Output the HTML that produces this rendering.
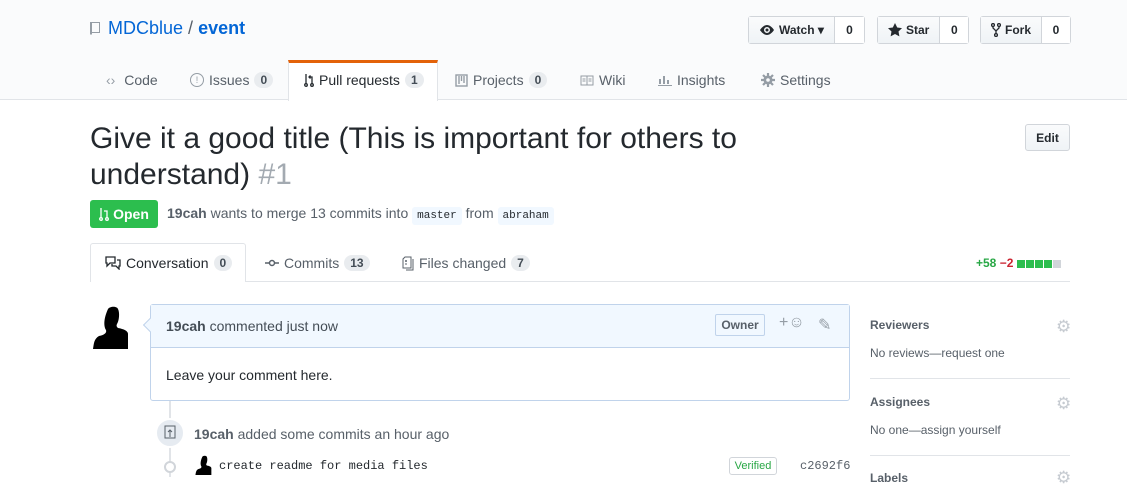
<!DOCTYPE html>
<html><head><meta charset="utf-8"><style>
*{box-sizing:border-box;margin:0;padding:0}
body{width:1127px;height:477px;overflow:hidden;background:#fff;font-family:"Liberation Sans",sans-serif;font-size:14px;color:#24292e;position:relative}
.abs{position:absolute}
.hdr{position:absolute;left:0;top:0;width:1127px;height:100px;background:#fafbfc;border-bottom:1px solid #e1e4e8}
.repo{left:89px;top:18px;font-size:18px;color:#0366d6}
.btn{position:absolute;top:16px;height:28px;border:1px solid #d1d5da;border-radius:3px;display:flex;font-size:12px;font-weight:bold}
.btn .l{background:linear-gradient(#fafbfc,#eff3f6);padding:0 10px;display:flex;align-items:center;gap:4px;border-right:1px solid #d1d5da}
.btn .r{background:#fff;width:28px;display:flex;align-items:center;justify-content:center}
.tab{position:absolute;top:72px;color:#586069;font-size:14px;display:flex;align-items:center;gap:5px}
.cnt{background:#e9ecef;border-radius:10px;font-size:12px;font-weight:bold;padding:1px 6px;color:#444d56}
.sel{position:absolute;left:288px;top:60px;width:150px;height:41px;background:#fff;border:1px solid #e1e4e8;border-top:3px solid #e36209;border-bottom:none}
.title{left:90px;top:121px;font-size:30px;line-height:36px;color:#24292e;width:720px}
code{font-family:"Liberation Mono",monospace;font-size:11px;background:#f1f8ff;padding:3px 5px;border-radius:3px;color:#24292e}
.side h{display:block;font-size:12px;font-weight:bold;color:#586069}
.side p{font-size:12px;color:#586069;margin-top:14px}
</style></head><body>
<div class="hdr"></div>
<svg class="abs" style="left:89px;top:21px" width="12" height="16" viewBox="0 0 12 16"><path d="M1 1h10v11H3v2l-1-1-1 1z M3 2v9h7V2z" fill="#959da5"/></svg>
<div class="abs repo" style="left:108px">MDCblue <span style="color:#586069">/</span> <b>event</b></div>
<div class="btn" style="left:748px"><div class="l"><svg width="16" height="12" viewBox="0 0 16 12"><path d="M8 1C4 1 1 6 1 6s3 5 7 5 7-5 7-5-3-5-7-5zm0 8a3 3 0 110-6 3 3 0 010 6zm0-4.5a1.5 1.5 0 100 3 1.5 1.5 0 000-3z" fill="#24292e"/></svg>Watch ▾</div><div class="r" style="width:29px">0</div></div>
<div class="btn" style="left:877px"><div class="l"><svg width="14" height="14" viewBox="0 0 14 14"><path d="M7 0l2.2 4.5 4.8.6-3.5 3.4.9 4.9L7 11l-4.4 2.4.9-4.9L0 5.1l4.8-.6z" fill="#24292e"/></svg>Star</div><div class="r">0</div></div>
<div class="btn" style="left:980px"><div class="l"><svg width="10" height="14" viewBox="0 0 10 14" fill="none" stroke="#24292e" stroke-width="1.3"><circle cx="2" cy="2" r="1.4"/><circle cx="8" cy="2" r="1.4"/><circle cx="5" cy="12" r="1.4"/><path d="M2 3.5v1.5l3 3 3-3V3.5M5 8v2.5"/></svg>Fork</div><div class="r">0</div></div>
<div class="sel"></div>
<div class="tab" style="left:106px"><span style="color:#959da5">‹›</span>&nbsp;Code</div>
<div class="tab" style="left:190px"><span style="color:#959da5;border:1.5px solid #959da5;border-radius:50%;width:14px;height:14px;font-size:9px;display:inline-flex;align-items:center;justify-content:center">!</span>Issues <span class="cnt">0</span></div>
<div class="tab" style="left:304px;color:#24292e"><svg width="10" height="14" viewBox="0 0 10 14" fill="none" stroke="#24292e" stroke-width="1.3"><circle cx="2" cy="12" r="1.3"/><circle cx="8" cy="12" r="1.3"/><path d="M2 1v9.5M8 10.5V4H5M6.5 2.5L5 4l1.5 1.5"/></svg>Pull requests <span class="cnt">1</span></div>
<div class="tab" style="left:455px"><svg width="13" height="13" viewBox="0 0 13 13" fill="none" stroke="#959da5" stroke-width="1.4"><rect x="1" y="1" width="11" height="11"/><path d="M4 2v8M6.5 2v5M9 2v7"/></svg>Projects <span class="cnt">0</span></div>
<div class="tab" style="left:580px"><svg width="14" height="11" viewBox="0 0 14 11" fill="none" stroke="#959da5"><rect x="1" y="1" width="12" height="9"/><path d="M7 1v9M2.5 4h3M2.5 6h3M8.5 4h3M8.5 6h3"/></svg>Wiki</div>
<div class="tab" style="left:658px"><svg width="14" height="12" viewBox="0 0 14 12" fill="#959da5"><rect x="0" y="11" width="14" height="1"/><rect x="1" y="5" width="2" height="5"/><rect x="5" y="2" width="2" height="8"/><rect x="9" y="6" width="2" height="4"/></svg>Insights</div>
<div class="tab" style="left:761px"><svg width="14" height="14" viewBox="0 0 14 14"><circle cx="7" cy="7" r="4.5" fill="#959da5"/><path d="M7 0v14M0 7h14M2 2l10 10M12 2L2 12" stroke="#959da5" stroke-width="2.2"/><circle cx="7" cy="7" r="1.8" fill="#fafbfc"/></svg>Settings</div>

<div class="abs title">Give it a good title (This is important for others to understand) <span style="color:#a3aab1">#1</span></div>
<div class="abs" style="left:1025px;top:124px;width:45px;height:27px;border:1px solid #d1d5da;border-radius:3px;background:linear-gradient(#fafbfc,#eff3f6);font-size:12px;font-weight:bold;display:flex;align-items:center;justify-content:center">Edit</div>
<div class="abs" style="left:90px;top:200px;width:68px;height:28px;background:#2cbe4e;border-radius:3px;color:#fff;font-weight:bold;font-size:14px;display:flex;align-items:center;justify-content:center;gap:4px"><svg width="10" height="14" viewBox="0 0 10 14" fill="none" stroke="#fff" stroke-width="1.3"><circle cx="2" cy="12" r="1.3"/><circle cx="8" cy="12" r="1.3"/><path d="M2 1v9.5M8 10.5V4H5"/></svg>Open</div>
<div class="abs" style="left:167px;top:205px;color:#586069"><b style="color:#586069">19cah</b> wants to merge 13 commits into <code>master</code> from <code>abraham</code></div>

<div class="abs" style="left:90px;top:281px;width:980px;border-top:1px solid #e1e4e8"></div>
<div class="abs" style="left:90px;top:243px;width:156px;height:39px;background:#fff;border:1px solid #e1e4e8;border-bottom:none;border-radius:3px 3px 0 0"></div>
<div class="tab" style="left:105px;top:255px;color:#24292e"><svg width="16" height="14" viewBox="0 0 16 14" fill="none" stroke="#24292e" stroke-width="1.3"><path d="M1 1h9v6H5l-3 3V7H1zM12 4h3v6h-1v3l-3-3H7V8"/></svg>Conversation <span class="cnt">0</span></div>
<div class="tab" style="left:265px;top:255px"><svg width="14" height="8" viewBox="0 0 14 8" fill="none" stroke="#586069" stroke-width="1.5"><circle cx="7" cy="4" r="2.5"/><path d="M0 4h4.5M9.5 4H14"/></svg>Commits <span class="cnt">13</span></div>
<div class="tab" style="left:402px;top:255px"><svg width="12" height="15" viewBox="0 0 12 15" fill="none" stroke="#586069"><path d="M3 1h6v11H1V3zM4 4v2M3 5h2M3 8h2"/><path d="M11 3v11H4"/></svg>Files changed <span class="cnt">7</span></div>
<div class="abs" style="left:976px;top:256px;font-size:12px;font-weight:bold"><span style="color:#28a745">+58</span> <span style="color:#cb2431">−2</span> <span style="display:inline-flex;gap:1px;vertical-align:-1px"><i style="width:8px;height:8px;background:#2cbe4e"></i><i style="width:8px;height:8px;background:#2cbe4e"></i><i style="width:8px;height:8px;background:#2cbe4e"></i><i style="width:8px;height:8px;background:#2cbe4e"></i><i style="width:8px;height:8px;background:#d1d5da"></i></span></div>

<svg class="abs" style="left:92px;top:305px" width="44" height="44" viewBox="0 0 44 44"><path d="M16 4c2-3 9-3 10 0 2 4 1 12-1 15-1 2 0 3 1 4 6 1 10 3 10 6v15H1c1-6 1-10 6-13 5-1 8-3 7-6-2-3-3-10 2-21z" fill="#000"/></svg>
<div class="abs" style="left:150px;top:304px;width:700px;height:97px;border:1px solid #c0d3eb;border-radius:3px"></div>
<div class="abs" style="left:151px;top:305px;width:698px;height:43px;background:#f1f8ff;border-bottom:1px solid #c0d3eb"></div>
<div class="abs" style="left:145px;top:320px;width:10px;height:10px;background:#f1f8ff;border-left:1px solid #c0d3eb;border-bottom:1px solid #c0d3eb;transform:rotate(45deg)"></div>
<div class="abs" style="left:166px;top:318px;color:#444d56"><b>19cah</b> commented just now</div>
<div class="abs" style="left:715px;top:314px;width:50px;height:22px;border:1px solid #c0d3eb;border-radius:2px;font-size:12px;font-weight:bold;color:#586069;display:flex;align-items:center;justify-content:center">Owner</div>
<div class="abs" style="left:779px;top:314px;color:#959da5;font-size:16px">+☺</div>
<div class="abs" style="left:818px;top:315px;color:#959da5;font-size:16px">✎</div>
<div class="abs" style="left:166px;top:367px">Leave your comment here.</div>
<div class="abs" style="left:169px;top:401px;width:2px;height:76px;background:#e1e4e8"></div>
<div class="abs" style="left:155px;top:418px;width:30px;height:30px;border-radius:50%;background:#e6ebf1;border:2px solid #fff"></div>
<svg class="abs" style="left:164px;top:425px" width="12" height="16" viewBox="0 0 12 16" fill="none" stroke="#586069"><path d="M1 1h10v12H1zM6 12V5M4 7l2-2 2 2"/></svg>
<div class="abs" style="left:194px;top:426px;color:#586069"><b>19cah</b> added some commits an hour ago</div>
<div class="abs" style="left:164px;top:461px;width:12px;height:12px;background:#fff;border:2px solid #d1d5da;border-radius:50%"></div>
<svg class="abs" style="left:195px;top:455px" width="20" height="20" viewBox="0 0 44 44"><path d="M16 4c2-3 9-3 10 0 2 4 1 12-1 15-1 2 0 3 1 4 6 1 10 3 10 6v15H1c1-6 1-10 6-13 5-1 8-3 7-6-2-3-3-10 2-21z" fill="#000"/></svg>
<div class="abs" style="left:219px;top:459px;font-family:'Liberation Mono',monospace;font-size:12px">create readme for media files</div>
<div class="abs" style="left:729px;top:457px;width:48px;height:18px;border:1px solid #d1d5da;border-radius:3px;font-size:11px;color:#28a745;display:flex;align-items:center;justify-content:center">Verified</div>
<div class="abs" style="left:800px;top:459px;font-family:'Liberation Mono',monospace;font-size:12px;color:#586069">c2692f6</div>

<div class="abs side" style="left:870px;top:318px;width:200px"><h>Reviewers</h><p>No reviews—request one</p></div>
<div class="abs" style="left:1056px;top:317px;color:#c6cbd1;font-size:17px">⚙</div>
<div class="abs" style="left:870px;top:378px;width:200px;border-top:1px solid #e1e4e8"></div>
<div class="abs side" style="left:870px;top:395px;width:200px"><h>Assignees</h><p>No one—assign yourself</p></div>
<div class="abs" style="left:1056px;top:394px;color:#c6cbd1;font-size:17px">⚙</div>
<div class="abs" style="left:870px;top:455px;width:200px;border-top:1px solid #e1e4e8"></div>
<div class="abs side" style="left:870px;top:471px"><h>Labels</h></div>
<div class="abs" style="left:1056px;top:468px;color:#c6cbd1;font-size:17px">⚙</div>
</body></html>
